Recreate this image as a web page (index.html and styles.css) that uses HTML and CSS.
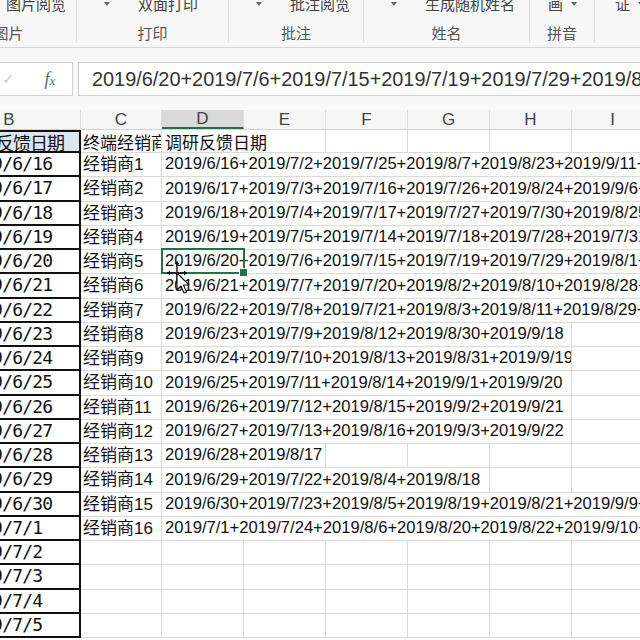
FILE: index.html
```html
<!DOCTYPE html>
<html lang="zh-CN">
<head>
    <meta charset="UTF-8">
    <title>调研反馈日期</title>
    <link rel="stylesheet" href="styles.css">
</head>
<body>
    <div class="ribbon">
        <div class="group g1">
            <div class="tools"><span class="drop"></span><span>图片阅览</span></div>
            <div class="label">图片</div>
        </div>
        <div class="group g2">
            <div class="tools"><span class="drop"></span><span>双面打印</span></div>
            <div class="label">打印</div>
        </div>
        <div class="group g3">
            <div class="tools"><span class="drop"></span><span>批注阅览</span></div>
            <div class="label">批注</div>
        </div>
        <div class="group g4">
            <div class="tools"><span class="drop"></span><span>生成随机姓名</span></div>
            <div class="label">姓名</div>
        </div>
        <div class="group g5">
            <div class="tools small"><span>画</span><span class="drop"></span></div>
            <div class="label">拼音</div>
        </div>
        <div class="group g6">
            <div class="tools small"><span>证</span><span class="drop"></span></div>
            <div class="label"></div>
        </div>
    </div>

    <div class="formula-bar">
        <div class="fx-box">
            <span class="check">✓</span>
            <span class="fx">f<i>x</i></span>
        </div>
        <div class="formula">2019/6/20+2019/7/6+2019/7/15+2019/7/19+2019/7/29+2019/8/1+2019/8/27</div>
    </div>

    <div class="sheet">
        <div class="row col-head">
            <div class="cell">B</div>
            <div class="cell">C</div>
            <div class="cell active">D</div>
            <div class="cell">E</div>
            <div class="cell">F</div>
            <div class="cell">G</div>
            <div class="cell">H</div>
            <div class="cell">I</div>
        </div>

        <div class="row first">
            <div class="cell date title">调研反馈日期</div>
            <div class="cell name">终端经销商</div>
            <div class="cell val span2">调研反馈日期</div>
            <div class="cell"></div><div class="cell"></div><div class="cell"></div><div class="cell"></div>
        </div>

        <div class="row">
            <div class="cell date">2019/6/16</div>
            <div class="cell name">经销商1</div>
            <div class="cell val span6">2019/6/16+2019/7/2+2019/7/25+2019/8/7+2019/8/23+2019/9/11+2019/9/25</div>
        </div>
        <div class="row">
            <div class="cell date">2019/6/17</div>
            <div class="cell name">经销商2</div>
            <div class="cell val span6">2019/6/17+2019/7/3+2019/7/16+2019/7/26+2019/8/24+2019/9/6+2019/9/24</div>
        </div>
        <div class="row">
            <div class="cell date">2019/6/18</div>
            <div class="cell name">经销商3</div>
            <div class="cell val span6">2019/6/18+2019/7/4+2019/7/17+2019/7/27+2019/7/30+2019/8/25+2019/9/13</div>
        </div>
        <div class="row">
            <div class="cell date">2019/6/19</div>
            <div class="cell name">经销商4</div>
            <div class="cell val span6">2019/6/19+2019/7/5+2019/7/14+2019/7/18+2019/7/28+2019/7/31+2019/9/12</div>
        </div>
        <div class="row">
            <div class="cell date">2019/6/20</div>
            <div class="cell name">经销商5</div>
            <div class="cell val span6 selected">2019/6/20+2019/7/6+2019/7/15+2019/7/19+2019/7/29+2019/8/1+2019/8/27
                <div class="sel"></div>
                <svg class="cursor" width="26" height="38" viewBox="0 0 26 38">
                    <path d="M1 15 H21 M11 4 V26" stroke="#111" stroke-width="1.4" fill="none"/>
                    <path d="M1 15 L4 12.5 V17.5 Z M21 15 L18 12.5 V17.5 Z M11 3 L8.5 6 H13.5 Z" fill="#111"/>
                    <path d="M11 15 L11 32 L15 28 L18 35 L20.5 34 L17.5 27 L23 27 Z" fill="#fff" stroke="#111" stroke-width="1.1" stroke-linejoin="round"/>
                </svg>
            </div>
        </div>
        <div class="row">
            <div class="cell date">2019/6/21</div>
            <div class="cell name">经销商6</div>
            <div class="cell val span6">2019/6/21+2019/7/7+2019/7/20+2019/8/2+2019/8/10+2019/8/28+2019/9/15</div>
        </div>
        <div class="row">
            <div class="cell date">2019/6/22</div>
            <div class="cell name">经销商7</div>
            <div class="cell val span6">2019/6/22+2019/7/8+2019/7/21+2019/8/3+2019/8/11+2019/8/29+2019/9/16</div>
        </div>
        <div class="row">
            <div class="cell date">2019/6/23</div>
            <div class="cell name">经销商8</div>
            <div class="cell val span5">2019/6/23+2019/7/9+2019/8/12+2019/8/30+2019/9/18</div>
            <div class="cell"></div>
        </div>
        <div class="row">
            <div class="cell date">2019/6/24</div>
            <div class="cell name">经销商9</div>
            <div class="cell val span5">2019/6/24+2019/7/10+2019/8/13+2019/8/31+2019/9/19</div>
            <div class="cell"></div>
        </div>
        <div class="row">
            <div class="cell date">2019/6/25</div>
            <div class="cell name">经销商10</div>
            <div class="cell val span5">2019/6/25+2019/7/11+2019/8/14+2019/9/1+2019/9/20</div>
            <div class="cell"></div>
        </div>
        <div class="row">
            <div class="cell date">2019/6/26</div>
            <div class="cell name">经销商11</div>
            <div class="cell val span5">2019/6/26+2019/7/12+2019/8/15+2019/9/2+2019/9/21</div>
            <div class="cell"></div>
        </div>
        <div class="row">
            <div class="cell date">2019/6/27</div>
            <div class="cell name">经销商12</div>
            <div class="cell val span5">2019/6/27+2019/7/13+2019/8/16+2019/9/3+2019/9/22</div>
            <div class="cell"></div>
        </div>
        <div class="row">
            <div class="cell date">2019/6/28</div>
            <div class="cell name">经销商13</div>
            <div class="cell val span2">2019/6/28+2019/8/17</div>
            <div class="cell"></div><div class="cell"></div><div class="cell"></div><div class="cell"></div>
        </div>
        <div class="row">
            <div class="cell date">2019/6/29</div>
            <div class="cell name">经销商14</div>
            <div class="cell val span4">2019/6/29+2019/7/22+2019/8/4+2019/8/18</div>
            <div class="cell"></div><div class="cell"></div>
        </div>
        <div class="row">
            <div class="cell date">2019/6/30</div>
            <div class="cell name">经销商15</div>
            <div class="cell val span6">2019/6/30+2019/7/23+2019/8/5+2019/8/19+2019/8/21+2019/9/9+2019/9/26</div>
        </div>
        <div class="row">
            <div class="cell date">2019/7/1</div>
            <div class="cell name">经销商16</div>
            <div class="cell val span6">2019/7/1+2019/7/24+2019/8/6+2019/8/20+2019/8/22+2019/9/10+2019/9/27</div>
        </div>

        <div class="row">
            <div class="cell date">2019/7/2</div>
            <div class="cell"></div><div class="cell"></div><div class="cell"></div><div class="cell"></div>
            <div class="cell"></div><div class="cell"></div><div class="cell"></div>
        </div>
        <div class="row">
            <div class="cell date">2019/7/3</div>
            <div class="cell"></div><div class="cell"></div><div class="cell"></div><div class="cell"></div>
            <div class="cell"></div><div class="cell"></div><div class="cell"></div>
        </div>
        <div class="row">
            <div class="cell date">2019/7/4</div>
            <div class="cell"></div><div class="cell"></div><div class="cell"></div><div class="cell"></div>
            <div class="cell"></div><div class="cell"></div><div class="cell"></div>
        </div>
        <div class="row">
            <div class="cell date">2019/7/5</div>
            <div class="cell"></div><div class="cell"></div><div class="cell"></div><div class="cell"></div>
            <div class="cell"></div><div class="cell"></div><div class="cell"></div>
        </div>
    </div>
</body>
</html>
```

FILE: styles.css
```css
* {
    margin: 0;
    padding: 0;
    box-sizing: border-box;
}

body {
    width: 640px;
    height: 640px;
    overflow: hidden;
    background: #fff;
    font-family: "Liberation Sans", "Noto Sans CJK SC", sans-serif;
    color: #111;
}

/* ribbon */
.ribbon {
    display: flex;
    height: 48px;
    margin-left: -55px;
    background: #f7f7f7;
    border-bottom: 1px solid #d6d6d6;
    overflow: hidden;
    font-family: "Noto Sans CJK SC", sans-serif;
    font-size: 15px;
    color: #444;
}

.group {
    flex: none;
    display: flex;
    flex-direction: column;
    height: 42px;
    border-right: 1px solid #dcdcdc;
}

.g1 { width: 132px; }
.g2 { width: 152px; }
.g3 { width: 135px; }
.g4 { width: 166px; }
.g5 { width: 65px; }
.g6 { width: 120px; }

.g1 .label {
    padding-right: 4px;
}

.tools {
    display: flex;
    align-items: center;
    gap: 28px;
    height: 18px;
    margin-top: -5px;
    padding-left: 27px;
    line-height: 18px;
    white-space: nowrap;
}

.tools.small {
    gap: 8px;
    padding-left: 18px;
}

.g6 .tools.small {
    padding-left: 20px;
}

.drop {
    width: 0;
    height: 0;
    border-left: 3.5px solid transparent;
    border-right: 3.5px solid transparent;
    border-top: 4px solid #666;
}

.label {
    margin-top: auto;
    height: 18px;
    line-height: 18px;
    text-align: center;
    color: #555;
}

/* formula bar */
.formula-bar {
    display: flex;
    gap: 5px;
    height: 62px;
    padding-top: 14px;
    padding-bottom: 14px;
    margin-left: -1px;
    margin-right: -20px;
    background: #f8f8f8;
}

.fx-box {
    display: flex;
    align-items: center;
    width: 74px;
    padding-left: 2px;
    background: #fff;
    border: 1px solid #cfcfcf;
}

.check {
    font-family: "DejaVu Sans", sans-serif;
    font-size: 15px;
    color: #c9c9c9;
}

.fx {
    margin-left: 30px;
    font-family: "Liberation Serif", serif;
    font-style: italic;
    font-size: 18px;
    color: #666;
}

.fx i {
    font-size: 13px;
}

.formula {
    flex: 1;
    padding-left: 13px;
    background: #fff;
    border: 1px solid #cfcfcf;
    font-size: 19.9px;
    line-height: 32px;
    color: #333;
    white-space: nowrap;
    overflow: hidden;
}

/* sheet */
.sheet {
    margin-left: -62px;
}

.row {
    display: grid;
    grid-template-columns: 143px 81px repeat(6, 82px);
    height: 24.25px;
}

.row.col-head {
    height: 20px;
    background: #f6f6f6;
    border-bottom: 1px solid #d2d2d2;
}

.row.first {
    height: 23px;
}

.cell {
    display: flex;
    align-items: center;
    min-width: 0;
    padding-left: 3px;
    border-right: 1px solid #dadada;
    border-bottom: 1px solid #dadada;
    font-size: 16.6px;
    line-height: 1;
    white-space: nowrap;
    overflow: hidden;
}

.col-head .cell {
    justify-content: center;
    padding-left: 0;
    border-bottom: none;
    border-right-color: #e0e0e0;
    font-size: 17px;
    color: #444;
}

.col-head .cell.active {
    background: #d9d9d9;
    border-bottom: 2px solid #217346;
}

.cell.date {
    padding-left: 24px;
    border-right: 2px solid #111;
    border-bottom: 2px solid #111;
    font-family: "DejaVu Sans Mono", monospace;
    font-size: 18px;
    letter-spacing: -0.8px;
}

.cell.title {
    padding-left: 24px;
    background: #dce6f1;
    border-top: 2px solid #111;
    font-family: "Noto Sans CJK SC", sans-serif;
    font-size: 18px;
    letter-spacing: -1px;
}

.cell.name {
    padding-left: 2px;
    font-size: 17px;
}

.first .cell.name,
.first .cell.val {
    font-family: "Noto Sans CJK SC", sans-serif;
    font-size: 17px;
}

.span2 { grid-column: span 2; }
.span4 { grid-column: span 4; }
.span5 { grid-column: span 5; }
.span6 { grid-column: span 6; }

.cell.selected {
    position: relative;
    overflow: visible;
}

.sel {
    position: absolute;
    left: -1px;
    top: -2px;
    width: 84px;
    height: 26px;
    border: 2px solid #217346;
}

.sel::after {
    content: "";
    position: absolute;
    right: -5px;
    bottom: -5px;
    width: 7px;
    height: 7px;
    background: #217346;
    border: 1px solid #fff;
}

.cursor {
    position: absolute;
    left: 4px;
    top: 8px;
}
```
